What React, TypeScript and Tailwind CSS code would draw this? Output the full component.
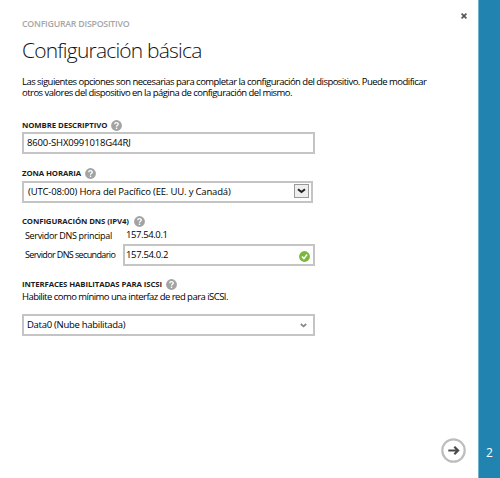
import type { ReactNode } from 'react';

function Help() {
  return (
    <svg className="block shrink-0" width="11" height="11" viewBox="0 0 11 11">
      <circle cx="5.5" cy="5.5" r="5.4" fill="#a3a3a3" />
      <path d="M3.7 4.2C3.7 2 7.3 2 7.3 4.1C7.3 5.3 5.5 5.3 5.5 6.7" fill="none" stroke="#fff" strokeWidth="1.3" />
      <rect x="4.8" y="7.6" width="1.4" height="1.4" fill="#fff" />
    </svg>
  );
}

function Label({ children, className }: { children: ReactNode; className: string }) {
  return (
    <div className="flex h-[11px] items-center">
      <span className={`shrink-0 whitespace-nowrap text-[7.8px] leading-[11px] font-bold tracking-[-0.1px] text-[#1c1c1c] ${className}`}>{children}</span>
      <Help />
    </div>
  );
}

export default function App() {
  return (
    <div className="flex h-[478px] w-[500px] overflow-hidden bg-white font-['Open_Sans','Noto_Sans',sans-serif] text-[9.5px] text-black">
      <main className="flex w-[478px] flex-col pl-[22px]">
        <div className="flex h-[30px] justify-between pr-[11px]">
          <span className="mt-[18px] h-3 w-[120px] text-[8.8px] leading-[13px] font-semibold tracking-[-0.25px] whitespace-nowrap text-[#a6a6a6]">CONFIGURAR DISPOSITIVO</span>
          <svg className="mt-[13px]" width="6" height="6" viewBox="0 0 6 6">
            <path d="M.6.6 5.4 5.4M5.4.6.6 5.4" stroke="#555" strokeWidth="1.7" />
          </svg>
        </div>
        <h1 className="mt-1 h-8 text-[21px] leading-[32px] font-light tracking-[-0.8px] whitespace-nowrap text-[#111] [font-variant-ligatures:none]">Configuración básica</h1>
        <div className="mt-[10px] h-[22px] text-[9.5px] leading-[11px] tracking-[-0.53px] whitespace-nowrap">
          <p>Las siguientes opciones son necesarias para completar la configuración del dispositivo. Puede modificar</p>
          <p>otros valores del dispositivo en la página de configuración del mismo.</p>
        </div>

        <div className="mt-[22px]">
          <Label className="w-[89px]">NOMBRE DESCRIPTIVO</Label>
        </div>
        <div className="mt-px flex h-[22px] w-[293px] items-center border-2 border-[#c4c4c4] pl-[3px] tracking-[-0.15px]">8600-SHX0991018G44RJ</div>

        <div className="mt-[14px]">
          <Label className="w-[63px]">ZONA HORARIA</Label>
        </div>
        <div className="mt-[2px] flex h-[22px] w-[291px] items-center justify-between border-2 border-[#c4c4c4] pr-[2px] pl-1 tracking-[-0.17px]">
          <span>(UTC-08:00) Hora del Pacífico (EE. UU. y Canadá)</span>
          <span className="mb-[2px] flex h-[14px] w-[15px] items-center justify-center border border-[#999] bg-[#eee]">
            <svg width="9" height="6" viewBox="0 0 9 6">
              <path d="M1 1.2 4.5 4 8 1.2" fill="none" stroke="#222" strokeWidth="2" />
            </svg>
          </span>
        </div>

        <div className="mt-[13px]">
          <Label className="w-[112px]">CONFIGURACIÓN DNS (IPV4)</Label>
        </div>
        <div className="flex h-[17px] items-center pl-[3px] whitespace-nowrap">
          <span className="mt-px w-[101px] text-[9px] tracking-[-0.34px]">Servidor DNS principal</span>
          <span className="tracking-[-0.4px]">157.54.0.1</span>
        </div>
        <div className="flex h-[22px] items-center pl-[3px] whitespace-nowrap">
          <span className="w-[98px] text-[9px] tracking-[-0.62px]">Servidor DNS secundario</span>
          <div className="flex h-[22px] w-[192px] items-center justify-between border-2 border-[#c4c4c4] pr-[3px] pl-[1px]">
            <span className="tracking-[-0.35px]">157.54.0.2</span>
            <svg className="mt-[2px]" width="11" height="11" viewBox="0 0 11 11">
              <circle cx="5.5" cy="5.5" r="5.4" fill="#7ab83a" />
              <path d="M2.9 5.5 4.9 7.6 8.1 3.5" fill="none" stroke="#fff" strokeWidth="1.5" />
            </svg>
          </div>
        </div>

        <div className="mt-[13px]">
          <Label className="w-[144px]">INTERFACES HABILITADAS PARA ISCSI</Label>
        </div>
        <div className="h-[13px] leading-[14px] tracking-[-0.53px] whitespace-nowrap">Habilite como mínimo una interfaz de red para iSCSI.</div>
        <div className="mt-[11px] flex h-[22px] w-[293px] items-center justify-between border-2 border-[#c4c4c4] pr-[6px] pl-[3px] tracking-[-0.28px]">
          <span>Data0 (Nube habilitada)</span>
          <svg width="7" height="5" viewBox="0 0 7 5">
            <path d="M.8 1 3.5 3.4 6.2 1" fill="none" stroke="#888" strokeWidth="1.7" />
          </svg>
        </div>

        <div className="mt-auto mr-3 mb-[15px] flex justify-end">
          <svg width="25" height="25" viewBox="0 0 25 25">
            <circle cx="12.5" cy="12.5" r="11.2" fill="#fff" stroke="#bdbdbd" strokeWidth="2.2" />
            <path d="M7.3 12.5H17M13.3 8.7 17.1 12.5 13.3 16.3" fill="none" stroke="#4a4a4a" strokeWidth="2.2" />
          </svg>
        </div>
      </main>
      <aside className="flex w-[22px] items-end justify-center border-l border-[#70b2ce] bg-[#2083b0] pb-4 text-[12px] leading-[18px] text-white">2</aside>
    </div>
  );
}
